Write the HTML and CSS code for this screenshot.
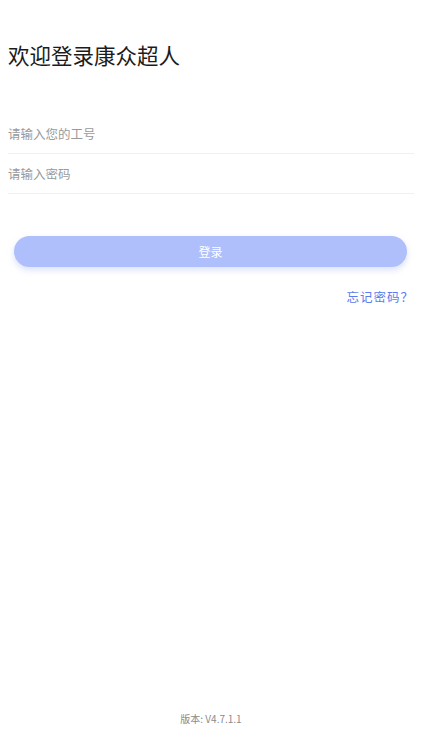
FILE: index.html
```html
<!DOCTYPE html>
<html lang="zh-CN">
<head>
    <meta charset="UTF-8">
    <meta name="viewport" content="width=device-width, initial-scale=1.0">
    <title>登录</title>
    <link rel="stylesheet" href="styles.css">
</head>
<body>
    <div id="page">
        <h1 class="title">欢迎登录康众超人</h1>
        <div class="form">
            <div class="field"><input type="text" placeholder="请输入您的工号"></div>
            <div class="field"><input type="password" placeholder="请输入密码"></div>
        </div>
        <button class="loginBtn">登录</button>
        <div class="forgot"><a>忘记密码？</a></div>
        <div class="version">版本: V4.7.1.1</div>
    </div>
</body>
</html>
```

FILE: styles.css
```css
body{
    margin: 0px;
    background-color: #ffffff;
    font-family: "Noto Sans CJK SC", "Noto Sans", sans-serif;
    color: #222222;
}
#page{
    display: flex;
    flex-direction: column;
    min-height: 100vh;
    padding: 0 8px;
    box-sizing: border-box;
}
.title{
    font-size: 21.5px;
    font-weight: 400;
    line-height: 30px;
    margin: 40px 0 0 0;
    color: #1c1c1c;
}
.form{
    margin-top: 44px;
}
.field{
    height: 39px;
    border-bottom: 1px solid #f0f0f0;
    display: flex;
    align-items: center;
}
.field input{
    border: none;
    outline: none;
    padding: 0;
    width: 100%;
    font-family: inherit;
    font-size: 12.5px;
    background: transparent;
}
.field input::placeholder{
    color: #9a9a9a;
}
.loginBtn{
    margin: 42px 7px 0 6px;
    height: 31px;
    border: none;
    border-radius: 16px;
    background-color: #aebffb;
    color: #ffffff;
    font-family: inherit;
    font-size: 12px;
    box-shadow: 0 3px 6px rgba(150, 170, 240, 0.35);
}
.forgot{
    text-align: right;
    margin-top: 16px;
    padding-right: 0;
}
.forgot a{
    color: #5b7bef;
    font-size: 12.5px;
    letter-spacing: 1px;
}
.version{
    margin-top: auto;
    margin-bottom: 24px;
    text-align: center;
    font-size: 10px;
    color: #8a8a8a;
}
```
